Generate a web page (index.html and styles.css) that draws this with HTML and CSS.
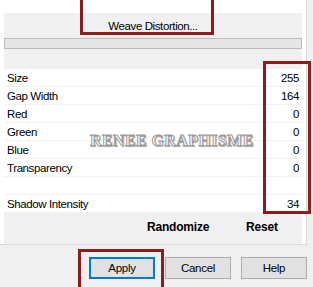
FILE: index.html
```html
<!DOCTYPE html>
<html lang="en">
<head>
  <meta charset="UTF-8">
  <title>Weave Distortion</title>
  <link rel="stylesheet" href="styles.css">
</head>
<body>

<div id="dialog">
  <div class="pane">
    <div class="header">
      <div class="title">Weave Distortion...</div>
      <div class="progress"></div>
    </div>

    <div class="rows">
      <div class="row"><span>Size</span><span>255</span></div>
      <div class="row"><span>Gap Width</span><span>164</span></div>
      <div class="row"><span>Red</span><span>0</span></div>
      <div class="row"><span>Green</span><span>0</span></div>
      <div class="row"><span>Blue</span><span>0</span></div>
      <div class="row"><span>Transparency</span><span>0</span></div>
      <div class="row"><span></span><span></span></div>
      <div class="row"><span>Shadow Intensity</span><span>34</span></div>
    </div>

    <div class="tools">
      <span class="tool-randomize">Randomize</span>
      <span class="tool-reset">Reset</span>
    </div>
  </div>

  <div class="buttons">
    <button class="btn default">Apply</button>
    <button class="btn">Cancel</button>
    <button class="btn">Help</button>
  </div>

  <div class="watermark">RENEE GRAPHISME</div>
  <div class="mark mark-title"></div>
  <div class="mark mark-values"></div>
  <div class="mark mark-apply"></div>
</div>

</body>
</html>
```

FILE: styles.css
```css
body {
  margin: 0;
  padding: 0;
  background-color: #fff;
  font-family: 'Liberation Sans', Arial, sans-serif;
  font-size: 11.5px;
  letter-spacing: -0.4px;
  color: #000;
}

#dialog {
  position: relative;
  width: 313px;
  height: 287px;
  overflow: hidden;
  background-color: #f0f0f0;
}

.pane {
  width: 307px;
  height: 245px;
  padding: 13px 4px 0 4px;
  box-sizing: border-box;
  background-color: #fff;
  border-right: 1px solid #d9d9d9;
  border-bottom: 1px solid #d9d9d9;
}

.header {
  height: 56px;
  background-color: #f0f0f0;
  padding-top: 6px;
  box-sizing: border-box;
}

.title {
  text-align: center;
  line-height: 15px;
  height: 19px;
}

.progress {
  height: 11px;
  box-sizing: border-box;
  border: 1px solid #bcbcbc;
  background-color: #e6e6e6;
}

.row {
  display: flex;
  justify-content: space-between;
  height: 18px;
  line-height: 18px;
  padding: 0 3px;
  box-sizing: border-box;
  border-bottom: 1px solid #f2f2f2;
}

.tools {
  height: 31px;
  background-color: #f0f0f0;
  font-size: 12px;
  font-weight: bold;
  letter-spacing: -0.2px;
  line-height: 28px;
  position: relative;
}

.tool-randomize {
  position: absolute;
  left: 143px;
}

.tool-reset {
  position: absolute;
  left: 242px;
}

.buttons {
  display: flex;
  gap: 10px;
  padding: 12px 0 0 89px;
}

.btn {
  width: 66px;
  height: 22px;
  padding: 0;
  font-family: 'Liberation Sans', Arial, sans-serif;
  font-size: 11.5px;
  letter-spacing: -0.3px;
  color: #000;
  background-color: #e1e1e1;
  border: 1px solid #adadad;
}

.btn.default {
  border: 2px solid #0078d7;
}

.watermark {
  position: absolute;
  left: 90px;
  top: 132px;
  font-family: 'Liberation Serif', 'Times New Roman', serif;
  font-size: 16px;
  font-weight: bold;
  letter-spacing: 0.4px;
  color: #fff;
  -webkit-text-stroke: 1px #9a9a9a;
  text-shadow: 1px 1px 1px #b8b8b8;
}

.mark {
  position: absolute;
  border: 3px solid #8e1c1c;
  box-sizing: border-box;
}

.mark-title {
  left: 80px;
  top: -3px;
  width: 134px;
  height: 38px;
}

.mark-values {
  left: 263px;
  top: 61px;
  width: 48px;
  height: 153px;
}

.mark-apply {
  left: 78px;
  top: 249px;
  width: 86px;
  height: 45px;
}
```
